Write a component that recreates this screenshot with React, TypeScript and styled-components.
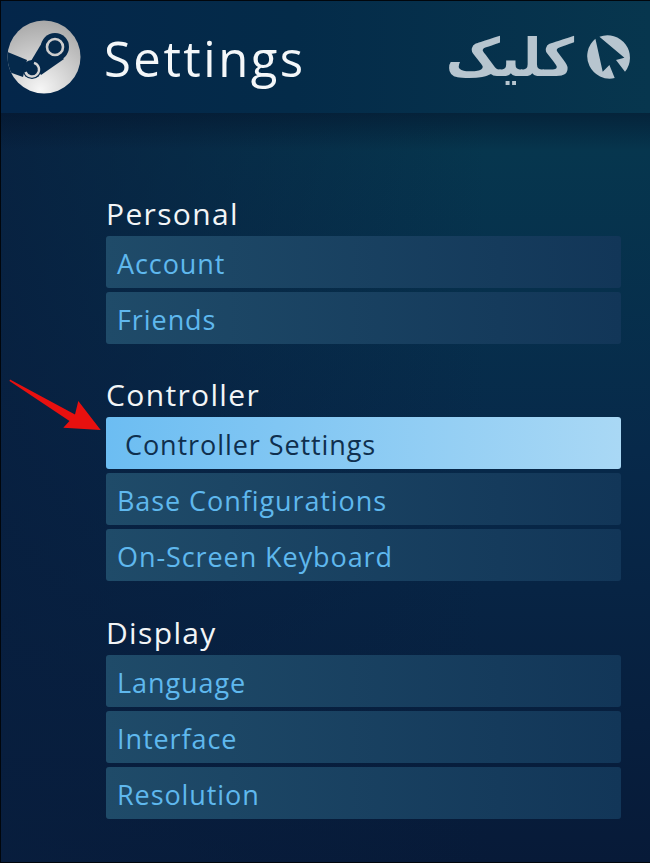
import React, { FC } from 'react';
import styled, { createGlobalStyle } from 'styled-components';

const GlobalStyle = createGlobalStyle`
  html, body {
    margin: 0;
    padding: 0;
    background: #03233f;
  }
`;

const Page = styled.div`
  position: relative;
  width: 650px;
  height: 863px;
  box-sizing: border-box;
  overflow: hidden;
  border: solid #01060c;
  border-width: 1px 0 1px 1px;
  font-family: 'Open Sans', 'Noto Sans', sans-serif;
  background:
    linear-gradient(180deg, rgba(4, 20, 42, 0.55) 112px, rgba(4, 20, 42, 0) 150px),
    linear-gradient(90deg, rgba(8, 30, 62, 0.8) 0, rgba(8, 30, 62, 0) 75%),
    linear-gradient(180deg, #06374f 0, #06364e 150px, #07294a 450px, #071a38 100%);
`;

const Header = styled.header`
  display: flex;
  align-items: center;
  height: 112px;
  padding: 0 18px 0 6px;
  box-sizing: border-box;
  background: linear-gradient(90deg, #04264a 0%, #042b49 45%, #07364e 100%);
`;

const Title = styled.h1`
  margin: 2px 0 0 23px;
  font-size: 49px;
  font-weight: 400;
  line-height: 1;
  letter-spacing: 2.5px;
  color: #f4f7f9;
`;

const Brand = styled.div`
  display: flex;
  align-items: center;
  gap: 12px;
  margin-left: auto;
`;

const BrandName = styled.span`
  font-family: 'DejaVu Sans', sans-serif;
  font-size: 53px;
  font-weight: 700;
  line-height: 1;
  color: #b7c5cf;
`;

const Menu = styled.main`
  display: flex;
  flex-direction: column;
  gap: 34px;
  padding: 84px 29px 0 105px;
`;

const Section = styled.section`
  display: flex;
  flex-direction: column;
  gap: 4px;

  &:last-child {
    margin-top: 1px;
  }
`;

const SectionTitle = styled.h2`
  margin: 0 0 -1px;
  height: 36px;
  font-size: 30px;
  font-weight: 400;
  line-height: 33px;
  letter-spacing: 1.35px;
  color: #f2f5f7;
`;

const Row = styled.div<{ $active?: boolean }>`
  display: flex;
  align-items: center;
  height: 52px;
  box-sizing: border-box;
  padding: 2px 0 0 ${({ $active }) => ($active ? '19px' : '11px')};
  border-radius: 3px;
  font-size: 27px;
  letter-spacing: 0.92px;
  color: ${({ $active }) => ($active ? '#0f2f4e' : '#5fb8ee')};
  background: ${({ $active }) =>
    $active
      ? 'linear-gradient(90deg, #6cbdf2 0%, #a9d8f5 100%)'
      : 'linear-gradient(90deg, #1f4b69 0%, #123658 100%)'};
`;

const Arrow = styled.svg`
  position: absolute;
  left: -1px;
  top: 369px;
`;

const SteamLogo: FC = () => (
  <svg width="74" height="74" viewBox="0 0 74 74">
    <defs>
      <radialGradient id="steamDisc" cx="0.45" cy="0.95" r="0.95">
        <stop offset="0" stopColor="#f6f6f6" />
        <stop offset="1" stopColor="#a8a8a8" />
      </radialGradient>
      <clipPath id="steamClip">
        <circle cx="37" cy="37" r="36.5" />
      </clipPath>
    </defs>
    <circle cx="37" cy="37" r="36.5" fill="url(#steamDisc)" />
    <g clipPath="url(#steamClip)" fill="#05294b">
      <path d="M-2 31 L20 40 L16 57 L2 52 Z" />
      <path d="M36 21 L24 41 L34 55 L57 39 Z" />
      <circle cx="48" cy="27" r="14" />
      <circle cx="25" cy="49.5" r="9.5" />
    </g>
    <circle cx="48" cy="27" r="8" fill="none" stroke="#cdcdcd" strokeWidth="2.6" />
    <path d="M27 42.8 A7 7 0 1 1 18.5 52" fill="none" stroke="#d6d6d6" strokeWidth="2.4" />
  </svg>
);

const BrandMark: FC = () => (
  <svg width="46" height="46" viewBox="0 0 46 46">
    <path
      fill="#b7c5cf"
      d="M13.4 2.7 A22.5 22.5 0 0 1 39 37.8 L30 26 L38.4 23.7 Z M9.4 4.8 A22.5 22.5 0 0 0 28.7 44.1 L23.4 31 L16.7 37.7 Z"
    />
  </svg>
);

const sections = [
  { title: 'Personal', items: ['Account', 'Friends'] },
  { title: 'Controller', items: ['Controller Settings', 'Base Configurations', 'On-Screen Keyboard'] },
  { title: 'Display', items: ['Language', 'Interface', 'Resolution'] },
];

const App: FC = () => (
  <Page>
    <GlobalStyle />
    <Header>
      <SteamLogo />
      <Title>Settings</Title>
      <Brand>
        <BrandName>کلیک</BrandName>
        <BrandMark />
      </Brand>
    </Header>
    <Menu>
      {sections.map((section) => (
        <Section key={section.title}>
          <SectionTitle>{section.title}</SectionTitle>
          {section.items.map((item) => (
            <Row key={item} $active={item === 'Controller Settings'}>
              {item}
            </Row>
          ))}
        </Section>
      ))}
    </Menu>
    <Arrow width="110" height="70" viewBox="0 0 110 70">
      <path fill="#e8100f" d="M10 9.5 L75 44.5 L78.3 31 L100.7 60 L63.3 57.7 L69.5 51 L9.5 11 Z" />
    </Arrow>
  </Page>
);

export default App;
